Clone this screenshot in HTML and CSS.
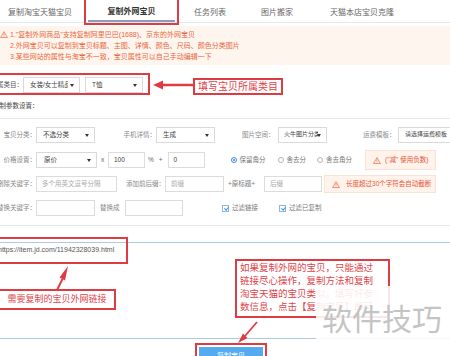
FILE: index.html
```html
<!DOCTYPE html>
<html lang="zh-CN">
<head>
<meta charset="UTF-8">
<title>复制外网宝贝</title>
<link rel="stylesheet" href="styles.css">
</head>
<body>

<!-- Tabs -->
<div class="tabs">
    <div class="tab tab-first">复制淘宝天猫宝贝</div>
    <div class="tab tab-active">复制外网宝贝</div>
    <div class="tab tab-task">任务列表</div>
    <div class="tab tab-pic">图片搬家</div>
    <div class="tab tab-clone">天猫本店宝贝克隆</div>
</div>

<!-- Notice -->
<div class="notice">
    <svg class="warn-icon" viewBox="0 0 10 9"><path d="M5 0.8 L9.4 8.4 L0.6 8.4 Z" fill="none" stroke="#e8683d" stroke-width="0.9"/><path d="M5 3.3 V6" stroke="#e8683d" stroke-width="0.9"/><circle cx="5" cy="7.2" r="0.5" fill="#e8683d"/></svg>
    <div class="notice-text">
        <div>1."复制外网商品"支持复制阿里巴巴(1688)、京东的外网宝贝</div>
        <div>2.外网宝贝可以复制到宝贝标题、主图、详情、颜色、尺码、颜色分类图片</div>
        <div>3.某些网站的属性与淘宝不一致，宝贝属性可以自己手动编辑一下</div>
    </div>
</div>

<!-- Category -->
<div class="cat-row">
    <span class="cat-label">宝贝所属类目：</span>
    <div class="select sel-cat1"><span class="sel-text">女装/女士精品</span></div>
    <div class="select sel-cat2"><span class="sel-text">T恤</span></div>
</div>

<div class="params-title">复制参数设置：</div>
<div class="divider first-divider"></div>

<!-- Row 1 -->
<div class="form-row row-one">
    <span class="lbl">宝贝分类：</span>
    <div class="select sel-sort"><span class="sel-text">不选分类</span></div>
    <span class="field-lbl gap-mobile">手机详情：</span>
    <div class="select sel-mobile"><span class="sel-text">生成</span></div>
    <span class="field-lbl gap-pic">图片空间：</span>
    <div class="select sel-pic small-text"><span class="sel-text">火牛图片分类</span></div>
    <span class="field-lbl gap-freight">运费模板：</span>
    <div class="select sel-freight small-text"><span class="sel-text">请选择运费模板</span></div>
</div>

<!-- Row 2 -->
<div class="form-row row-two">
    <span class="lbl">价格设置：</span>
    <div class="select sel-price"><span class="sel-text">原价</span></div>
    <span class="times">x</span>
    <div class="input in-rate">100</div>
    <span class="percent">%</span>
    <span class="plus">+</span>
    <div class="input in-add">0</div>
    <span class="radio checked first-radio"></span><span class="opt-text">保留角分</span>
    <span class="radio second-radio"></span><span class="opt-text">舍去分</span>
    <span class="radio third-radio"></span><span class="opt-text">舍去角分</span>
    <div class="warn warn-minus">
        <svg class="warn-icon" viewBox="0 0 10 9"><path d="M5 0.8 L9.4 8.4 L0.6 8.4 Z" fill="none" stroke="#e8683d" stroke-width="0.9"/><path d="M5 3.3 V6" stroke="#e8683d" stroke-width="0.9"/><circle cx="5" cy="7.2" r="0.5" fill="#e8683d"/></svg>
        <span class="warn-text">("减" 使用负数)</span>
    </div>
</div>

<!-- Row 3 -->
<div class="form-row row-three">
    <span class="lbl">删除关键字：</span>
    <div class="input in-del placeholder">多个用英文逗号分隔</div>
    <span class="field-lbl gap-prefix">添加前后缀：</span>
    <div class="input in-prefix placeholder">前缀</div>
    <span class="title-join">+原标题+</span>
    <div class="input in-suffix placeholder">后缀</div>
    <div class="warn warn-length">
        <svg class="warn-icon" viewBox="0 0 10 9"><path d="M5 0.8 L9.4 8.4 L0.6 8.4 Z" fill="none" stroke="#e8683d" stroke-width="0.9"/><path d="M5 3.3 V6" stroke="#e8683d" stroke-width="0.9"/><circle cx="5" cy="7.2" r="0.5" fill="#e8683d"/></svg>
        <span class="warn-text">长度超过30个字符会自动截断</span>
    </div>
</div>

<!-- Row 4 -->
<div class="form-row row-four">
    <span class="lbl">替换关键字：</span>
    <div class="input in-replace"></div>
    <span class="field-lbl gap-with">替换成</span>
    <div class="input in-with"></div>
    <span class="check first-check"></span><span class="opt-text">过滤链接</span>
    <span class="check second-check"></span><span class="opt-text">过滤已复制</span>
</div>

<div class="divider second-divider"></div>

<!-- Links -->
<div class="url-box">https://item.jd.com/11942328039.html</div>

<div class="btn-row">
    <div class="copy-btn">复制宝贝</div>
</div>

<!-- Annotations -->
<div class="mark mark-tab"></div>
<div class="mark mark-cat"></div>
<div class="note note-cat">填写宝贝所属类目</div>
<div class="mark mark-url"></div>
<div class="note note-link">需要复制的宝贝外网链接</div>
<div class="note note-tip">如果复制外网的宝贝，只能通过<br>链接尽心操作，复制方法和复制<br>淘宝天猫的宝贝类似，填写好参<br>数信息，点击【复制宝贝】即可</div>
<div class="mark mark-btn"></div>

<svg class="arrows" viewBox="0 0 450 356">
    <line x1="162" y1="85" x2="193" y2="85" stroke="#de3c43" stroke-width="2.5"/>
    <polygon points="153,85 163,80.5 163,89.5" fill="#de3c43"/>
    <line x1="57" y1="290" x2="62.5" y2="279" stroke="#de3c43" stroke-width="2"/>
    <polygon points="68,266 65,280.5 59.5,277.5" fill="#de3c43"/>
    <line x1="257" y1="322" x2="245" y2="336" stroke="#de3c43" stroke-width="1.8"/>
    <polygon points="238,343 247.5,338 243,333.5" fill="#de3c43"/>
</svg>

<div class="watermark">软件技巧</div>

</body>
</html>
```

FILE: styles.css
```css
/* Page */
* {
    box-sizing: border-box;
}

html, body {
    margin: 0;
    padding: 0;
}

body {
    position: relative;
    width: 450px;
    height: 356px;
    overflow: hidden;
    background: #fff;
    color: #888;
    font-family: "Liberation Sans", "Noto Sans CJK SC", sans-serif;
    font-size: 6.5px;
    line-height: 1.2;
}

/* Tabs */
.tabs {
    display: flex;
    height: 23px;
    padding-top: 3px;
    border-bottom: 1px solid #e2e8ef;
}

.tab {
    display: flex;
    align-items: center;
    justify-content: center;
    height: 19px;
    font-size: 8px;
    color: #666;
}

.tab-first { width: 80px; }
.tab-task { width: 70px; }
.tab-pic { width: 64px; }
.tab-clone { width: 106px; }

.tab-active {
    margin-left: 8px;
    width: 87px;
    color: #333;
    font-weight: bold;
    border-bottom: 2px solid #8b9dc3;
}

/* Notice */
.notice {
    display: flex;
    margin-top: 3px;
    padding: 3px 0;
    background: #fff5ef;
    color: #e8683d;
    font-size: 7px;
    line-height: 11px;
}

.notice > .warn-icon {
    width: 8px;
    height: 7px;
    margin: 2px 2px 0 0;
    flex-shrink: 0;
}

/* Category */
.cat-row {
    display: flex;
    align-items: center;
    height: 16px;
    margin-top: 12px;
}

.cat-label {
    display: flex;
    justify-content: flex-end;
    width: 23px;
    white-space: nowrap;
    color: #555;
}

.select {
    position: relative;
    display: flex;
    align-items: center;
    height: 16px;
    padding-left: 6px;
    padding-right: 11px;
    border: 1px solid #d9d9d9;
    background: #fff;
    color: #444;
    white-space: nowrap;
    flex-shrink: 0;
}

.sel-text {
    overflow: hidden;
    flex: 1;
}

.select::after {
    content: "";
    position: absolute;
    right: 5px;
    top: 6px;
    border-left: 2px solid transparent;
    border-right: 2px solid transparent;
    border-top: 3px solid #333;
}

.small-text {
    font-size: 6px;
}

.sel-cat1 { width: 57px; }
.sel-cat2 { width: 58px; margin-left: 5px; }

.params-title {
    margin-top: 7px;
    margin-left: -7px;
    line-height: 12px;
    color: #444;
}

.divider {
    border-top: 1px solid #e8e8e8;
}

.first-divider { margin-top: 6px; }
.second-divider { margin-top: 7px; }

/* Form rows */
.form-row {
    display: flex;
    align-items: center;
    height: 20px;
    white-space: nowrap;
}

.row-one { height: 16px; margin-top: 8px; }
.row-two { margin-top: 7px; }
.row-three { margin-top: 4px; }
.row-four { margin-top: 4px; }

.lbl {
    display: flex;
    justify-content: flex-end;
    width: 36px;
    flex-shrink: 0;
}

.sel-sort { width: 59px; }
.gap-mobile { margin-left: 28.5px; }
.sel-mobile { width: 59px; }
.gap-pic { margin-left: 27px; }
.sel-pic { width: 49px; margin-left: 3.5px; padding-left: 5px; padding-right: 8px; }
.gap-freight { margin-left: 36px; }
.sel-freight { width: 62px; margin-left: 2.5px; }

.input {
    display: flex;
    align-items: center;
    height: 16px;
    padding-left: 5px;
    border: 1px solid #dcdcdc;
    background: #fff;
    color: #444;
    flex-shrink: 0;
}

.placeholder {
    color: #aaa;
}

.sel-price { width: 61px; padding-left: 7px; }

.times {
    width: 11px;
    text-align: center;
    color: #666;
}

.in-rate { width: 37px; }
.percent { margin-left: 3px; color: #666; }
.plus { margin-left: 5px; color: #666; }
.in-add { width: 37px; margin-left: 5px; }

.radio {
    position: relative;
    width: 6px;
    height: 6px;
    border: 1px solid #b5b5b5;
    border-radius: 50%;
    flex-shrink: 0;
}

.radio.checked {
    border-color: #3a8ee6;
}

.radio.checked::after {
    content: "";
    position: absolute;
    left: 1px;
    top: 1px;
    width: 2px;
    height: 2px;
    border-radius: 50%;
    background: #3a8ee6;
}

.first-radio { margin-left: 26px; }
.second-radio { margin-left: 12px; }
.third-radio { margin-left: 11px; }

.opt-text {
    margin-left: 3px;
    color: #777;
}

.warn {
    display: flex;
    align-items: center;
    padding-left: 7px;
    background: #fff3eb;
    border: 1px solid #fbe2d3;
    color: #e8553a;
    flex-shrink: 0;
}

.warn .warn-icon {
    width: 8px;
    height: 7px;
}

.warn-minus {
    width: 71px;
    height: 20px;
    margin-left: 13px;
}

.warn-minus .warn-text { margin-left: 4px; }

.in-del { width: 81px; }
.gap-prefix { margin-left: 9px; }
.in-prefix { width: 59px; }
.title-join { margin-left: 4px; color: #777; }
.in-suffix { width: 58px; margin-left: 9px; }

.warn-length {
    width: 112px;
    height: 18px;
    margin-left: 2px;
}

.warn-length .warn-text { margin-left: 6px; }

.in-replace { width: 59px; }
.gap-with { margin-left: 5px; }
.in-with { width: 58px; margin-left: 5.5px; }

.check {
    position: relative;
    width: 7px;
    height: 7px;
    border: 1px solid #8fb8e0;
    flex-shrink: 0;
}

.check::after {
    content: "";
    position: absolute;
    left: 1.5px;
    top: 0;
    width: 1.5px;
    height: 3px;
    border-right: 1px solid #3a8ee6;
    border-bottom: 1px solid #3a8ee6;
    transform: rotate(40deg);
}

.first-check { margin-left: 39px; }
.second-check { margin-left: 21px; }

/* Link box */
.url-box {
    width: 470px;
    height: 97px;
    margin-top: 16px;
    margin-left: -10px;
    padding: 3px 7px;
    border: 1px solid #a9cbe6;
    color: #555;
    font-size: 7px;
    line-height: 8px;
}

.btn-row {
    margin-top: 8px;
    padding-left: 199px;
}

.copy-btn {
    width: 64px;
    height: 18px;
    background: #55aaf0;
    color: #fff;
    font-size: 7px;
    line-height: 18px;
    text-align: center;
}

/* Annotations */
.mark {
    position: absolute;
    border: 2px solid #de3c43;
}

.mark-tab { left: 84px; top: -2px; width: 95px; height: 27px; }
.mark-cat { left: -2px; top: 73px; width: 152px; height: 22px; }
.mark-url { left: -2px; top: 237px; width: 130px; height: 27px; }
.mark-btn { left: 195px; top: 343px; width: 72px; height: 20px; }

.note {
    position: absolute;
    border: 2px solid #de3c43;
    background: #fff;
    color: #e0434a;
    white-space: nowrap;
}

.note-cat {
    left: 193px;
    top: 78px;
    width: 90px;
    height: 17px;
    font-size: 10px;
    line-height: 13px;
    text-align: center;
}

.note-link {
    left: -2px;
    top: 289px;
    width: 118px;
    height: 21px;
    font-size: 9px;
    line-height: 17px;
    text-align: center;
}

.note-tip {
    left: 235px;
    top: 259px;
    width: 155px;
    height: 59px;
    padding-left: 3px;
    font-size: 9.5px;
    line-height: 13px;
}

.arrows {
    position: absolute;
    left: 0;
    top: 0;
    width: 450px;
    height: 356px;
    pointer-events: none;
}

.watermark {
    position: absolute;
    left: 316px;
    top: 286px;
    width: 134px;
    height: 60px;
    padding: 16px 0 0 6px;
    background: rgba(255, 255, 255, 0.88);
    color: #c4c4c4;
    font-family: "Noto Sans CJK SC", sans-serif;
    font-size: 30px;
    line-height: 30px;
    white-space: nowrap;
}
```
